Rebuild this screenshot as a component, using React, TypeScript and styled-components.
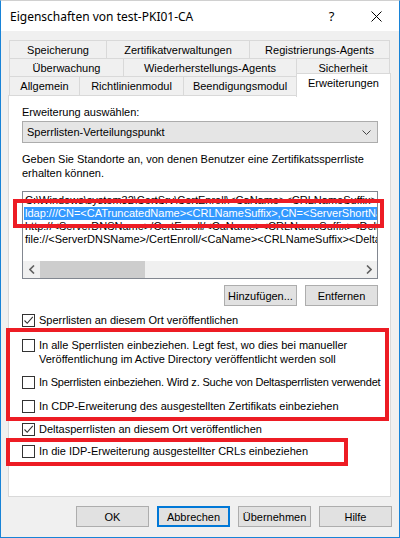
import React from 'react';
import styled, { createGlobalStyle } from 'styled-components';

const GlobalStyle = createGlobalStyle`
  html, body {
    margin: 0;
    padding: 0;
    background: #ffffff;
  }
  body {
    font-family: 'Liberation Sans', Arial, sans-serif;
    font-size: 11px;
    color: #000;
  }
`;

type TabDef = { label: string; width: number; selected?: boolean };

const tabRows: TabDef[][] = [
  [
    { label: 'Speicherung', width: 97 },
    { label: 'Zertifikatverwaltungen', width: 143 },
    { label: 'Registrierungs-Agents', width: 141 },
  ],
  [
    { label: 'Überwachung', width: 114 },
    { label: 'Wiederherstellungs-Agents', width: 173 },
    { label: 'Sicherheit', width: 94 },
  ],
  [
    { label: 'Allgemein', width: 70 },
    { label: 'Richtlinienmodul', width: 104 },
    { label: 'Beendigungsmodul', width: 113 },
    { label: 'Erweiterungen', width: 95, selected: true },
  ],
];

const locations = [
  'C:\\Windows\\system32\\CertSrv\\CertEnroll\\<CaName><CRLNameSuffix><DeltaCRLAllowed>.crl',
  'ldap:///CN=<CATruncatedName><CRLNameSuffix>,CN=<ServerShortName>,CN=CDP,CN=Public Key Services',
  'http://<ServerDNSName>/CertEnroll/<CaName><CRLNameSuffix><DeltaCRLAllowed>.crl',
  'file://<ServerDNSName>/CertEnroll/<CaName><CRLNameSuffix><DeltaCRLAllowed>.crl',
];

type OptionDef = { lines: string[]; checked: boolean; gap: number; tight?: boolean };

const options: OptionDef[] = [
  { lines: ['Sperrlisten an diesem Ort veröffentlichen'], checked: true, gap: 7 },
  {
    lines: [
      'In alle Sperrlisten einbeziehen. Legt fest, wo dies bei manueller',
      'Veröffentlichung im Active Directory veröffentlicht werden soll',
    ],
    checked: false,
    gap: 11,
  },
  {
    lines: ['In Sperrlisten einbeziehen. Wird z. Suche von Deltasperrlisten verwendet'],
    checked: false,
    gap: 9,
    tight: true,
  },
  { lines: ['In CDP-Erweiterung des ausgestellten Zertifikats einbeziehen'], checked: false, gap: 10 },
  { lines: ['Deltasperrlisten an diesem Ort veröffentlichen'], checked: true, gap: 9 },
  { lines: ['In die IDP-Erweiterung ausgestellter CRLs einbeziehen'], checked: false, gap: 8 },
];

// red annotation boxes drawn over the dialog
const marks = [
  { left: 12, top: 198, width: 371, height: 29 },
  { left: 5, top: 327, width: 383, height: 93 },
  { left: 5, top: 437, width: 342, height: 28 },
];

export default function App() {
  return (
    <>
      <GlobalStyle />
      <Window>
        <TitleBar>
          <Title>Eigenschaften von test-PKI01-CA</Title>
          <CaptionButton>?</CaptionButton>
          <CaptionButton>
            <svg width="11" height="11" viewBox="0 0 11 11">
              <path d="M0.5 0.5 L10.5 10.5 M10.5 0.5 L0.5 10.5" stroke="#000" strokeWidth="1" fill="none" />
            </svg>
          </CaptionButton>
        </TitleBar>

        <Body>
          <TabStrip>
            {tabRows.map((row, i) => (
              <TabRow key={i}>
                {row.map((tab) => (
                  <Tab key={tab.label} $width={tab.width} $selected={!!tab.selected}>
                    {tab.label}
                  </Tab>
                ))}
              </TabRow>
            ))}
          </TabStrip>

          <Panel>
            <Label>Erweiterung auswählen:</Label>
            <Select>
              <span>Sperrlisten-Verteilungspunkt</span>
              <svg width="9" height="6" viewBox="0 0 9 6">
                <path d="M0.5 0.5 L4.5 4.5 L8.5 0.5" stroke="#444" strokeWidth="1" fill="none" />
              </svg>
            </Select>

            <Description>
              Geben Sie Standorte an, von denen Benutzer eine Zertifikatssperrliste
              <br />
              erhalten können.
            </Description>

            <ListBox>
              <Items>
                {locations.map((loc, i) => (
                  <Item key={loc} $selected={i === 1}>
                    {loc}
                  </Item>
                ))}
              </Items>
              <ScrollBar>
                <ScrollArrow>
                  <svg width="6" height="9" viewBox="0 0 6 9">
                    <path d="M5 0.5 L1 4.5 L5 8.5" stroke="#606060" strokeWidth="1.6" fill="none" />
                  </svg>
                </ScrollArrow>
                <Thumb />
                <Track />
                <ScrollArrow>
                  <svg width="6" height="9" viewBox="0 0 6 9">
                    <path d="M1 0.5 L5 4.5 L1 8.5" stroke="#606060" strokeWidth="1.6" fill="none" />
                  </svg>
                </ScrollArrow>
              </ScrollBar>
            </ListBox>

            <ListButtons>
              <Button>Hinzufügen...</Button>
              <Button>Entfernen</Button>
            </ListButtons>

            {options.map((opt) => (
              <CheckRow key={opt.lines[0]} $gap={opt.gap}>
                <CheckBox>
                  {opt.checked && (
                    <svg width="11" height="11" viewBox="0 0 11 11">
                      <path d="M1.5 5.5 L4.2 8.3 L9.8 1.8" stroke="#333" strokeWidth="1.1" fill="none" />
                    </svg>
                  )}
                </CheckBox>
                <CheckText $tight={!!opt.tight}>
                  {opt.lines.map((line) => (
                    <div key={line}>{line}</div>
                  ))}
                </CheckText>
              </CheckRow>
            ))}
          </Panel>

          <Footer>
            <Button>OK</Button>
            <Button $default>Abbrechen</Button>
            <Button>Übernehmen</Button>
            <Button>Hilfe</Button>
          </Footer>
        </Body>

        {marks.map((m, i) => (
          <Mark key={i} $left={m.left} $top={m.top} $width={m.width} $height={m.height} />
        ))}
      </Window>
    </>
  );
}

const Window = styled.div`
  position: relative;
  box-sizing: border-box;
  width: 400px;
  height: 538px;
  border: 1px solid #1883d7;
  border-top-color: #d0d0d0;
  background: #f0f0f0;
  display: flex;
  flex-direction: column;
`;

const TitleBar = styled.div`
  height: 30px;
  flex-shrink: 0;
  background: #ffffff;
  display: flex;
  align-items: center;
  padding-left: 9px;
`;

const Title = styled.div`
  flex: 1;
  font-family: 'Noto Sans', 'Open Sans', sans-serif;
  font-size: 12px;
  color: #000;
`;

const CaptionButton = styled.div`
  width: 45px;
  height: 30px;
  display: flex;
  align-items: center;
  justify-content: center;
  font-family: 'Noto Sans', sans-serif;
  font-size: 13px;
`;

const Body = styled.div`
  flex: 1;
  display: flex;
  flex-direction: column;
  padding: 10px 0 0 7px;
`;

const TabStrip = styled.div`
  margin-left: 1px;
  width: 381px;
  display: flex;
  flex-direction: column;
`;

const TabRow = styled.div`
  display: flex;
  align-items: flex-end;
  height: 19px;
  margin-top: -1px;

  &:first-child {
    margin-top: 0;
    height: 18px;
  }
`;

const Tab = styled.div<{ $width: number; $selected: boolean }>`
  position: relative;
  box-sizing: border-box;
  flex-shrink: 0;
  width: ${({ $width }) => $width}px;
  height: ${({ $selected }) => ($selected ? 24 : 19)}px;
  margin-bottom: ${({ $selected }) => ($selected ? -2 : 0)}px;
  padding-bottom: ${({ $selected }) => ($selected ? 5 : 0)}px;
  z-index: ${({ $selected }) => ($selected ? 2 : 0)};
  display: flex;
  align-items: center;
  justify-content: center;
  background: ${({ $selected }) => ($selected ? '#ffffff' : '#f0f0f0')};
  border: 1px solid #d9d9d9;
  border-bottom: none;
  border-right: none;
  white-space: nowrap;

  &:last-child {
    border-right: 1px solid #d9d9d9;
  }
`;

const Panel = styled.div`
  position: relative;
  z-index: 1;
  box-sizing: border-box;
  width: 383px;
  height: 402px;
  background: #ffffff;
  border: 1px solid #d9d9d9;
  padding: 10px 12px 0 13px;
  display: flex;
  flex-direction: column;
`;

const Label = styled.div`
  line-height: 13px;
`;

const Select = styled.div`
  box-sizing: border-box;
  margin-top: 2px;
  height: 22px;
  background: #e5e5e5;
  border: 1px solid #acacac;
  display: flex;
  align-items: center;
  justify-content: space-between;
  padding: 0 6px 0 4px;

  svg {
    margin-top: 1px;
  }
`;

const Description = styled.div`
  margin-top: 9px;
  line-height: 14px;
`;

const ListBox = styled.div`
  box-sizing: border-box;
  margin-top: 11px;
  height: 88px;
  background: #ffffff;
  border: 1px solid #828790;
  display: flex;
  flex-direction: column;
  overflow: hidden;
`;

const Items = styled.div`
  flex: 1;
  padding-top: 2px;
  overflow: hidden;
`;

const Item = styled.div<{ $selected: boolean }>`
  height: 13px;
  line-height: 13px;
  margin-left: 1px;
  padding-left: 1px;
  white-space: nowrap;
  background: ${({ $selected }) => ($selected ? '#3399ff' : 'transparent')};
  color: ${({ $selected }) => ($selected ? '#ffffff' : '#000')};
`;

const ScrollBar = styled.div`
  height: 17px;
  display: flex;
  background: #f0f0f0;
`;

const ScrollArrow = styled.div`
  width: 17px;
  display: flex;
  align-items: center;
  justify-content: center;
`;

const Thumb = styled.div`
  width: 105px;
  background: #cdcdcd;
`;

const Track = styled.div`
  flex: 1;
`;

const ListButtons = styled.div`
  display: flex;
  justify-content: flex-end;
  gap: 8px;
  margin-top: 6px;
`;

const Button = styled.div<{ $default?: boolean }>`
  box-sizing: border-box;
  width: 73px;
  height: 21px;
  display: flex;
  align-items: center;
  justify-content: center;
  background: #e1e1e1;
  border: 1px solid ${({ $default }) => ($default ? '#0078d7' : '#adadad')};
  box-shadow: ${({ $default }) => ($default ? 'inset 0 0 0 1px #0078d7' : 'none')};
  white-space: nowrap;
`;

const CheckRow = styled.div<{ $gap: number }>`
  display: flex;
  align-items: flex-start;
  gap: 4px;
  margin-top: ${({ $gap }) => $gap}px;
  line-height: 14px;
`;

const CheckBox = styled.div`
  box-sizing: border-box;
  flex-shrink: 0;
  width: 13px;
  height: 13px;
  margin-top: 1px;
  background: #ffffff;
  border: 1px solid #333333;
  display: flex;
  align-items: center;
  justify-content: center;
`;

const CheckText = styled.div<{ $tight: boolean }>`
  white-space: nowrap;
  letter-spacing: ${({ $tight }) => ($tight ? '-0.2px' : 'normal')};
`;

const Footer = styled.div`
  display: flex;
  gap: 8px;
  margin-top: 9px;
  padding-left: 68px;
`;

const Mark = styled.div<{ $left: number; $top: number; $width: number; $height: number }>`
  position: absolute;
  box-sizing: border-box;
  left: ${({ $left }) => $left}px;
  top: ${({ $top }) => $top}px;
  width: ${({ $width }) => $width}px;
  height: ${({ $height }) => $height}px;
  border: 4px solid #ed1c24;
  pointer-events: none;
  z-index: 5;
`;
